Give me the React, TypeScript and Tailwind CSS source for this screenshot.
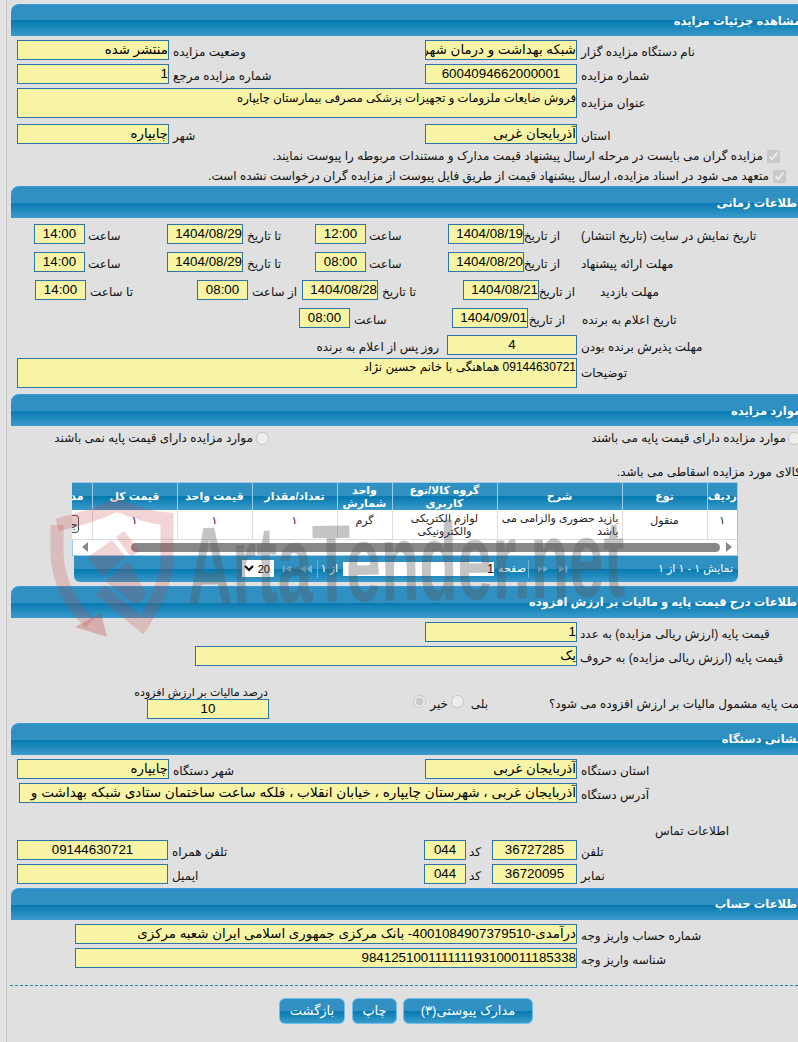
import React from 'react';

const barBg = 'bg-[linear-gradient(#2f90c1_0%,#2f90c1_50%,#0579b0_50%,#3b9bcb_100%)]';

const Section: React.FC<{ title: string; className?: string }> = ({ title, className = '' }) => (
  <div className={`h-[32px] ml-[4px] -mr-[30px] rounded-tl-[8px] border-t border-[#3a9ad9] flex items-center pr-[27px] pt-[2px] text-[11.5px] font-bold text-white ${barBg} ${className}`}>
    {title}
  </div>
);

const Lbl: React.FC<{ className: string; children?: React.ReactNode }> = ({ className, children }) => (
  <div className={`shrink-0 text-left whitespace-nowrap pt-[4px] leading-[16px] ${className}`}>{children}</div>
);

const Val: React.FC<{ className: string; children?: React.ReactNode }> = ({ className, children }) => (
  <div className={`shrink-0 h-[20px] bg-[#f7f5a5] border border-[#2a75a8] overflow-hidden whitespace-nowrap leading-[18px] text-[13.33px] text-black ${className}`}>{children}</div>
);

const Pager: React.FC<{ kind: 'end' | 'step'; flip?: boolean; className: string }> = ({ kind, flip, className }) => (
  <svg viewBox="0 0 12 8" className={`shrink-0 h-[8px] fill-[#6fb3d6] ${flip ? '-scale-x-100' : ''} ${className}`}>
    {kind === 'end' ? (
      <path d="M1 0h2v8H1zM11 0v8L4 4z" />
    ) : (
      <path d="M6 0v8L0 4zM12 0v8L6 4z" />
    )}
  </svg>
);

const columns = ['w-[30px]', 'w-[85px]', 'w-[125px]', 'w-[105px]', 'w-[55px]', 'w-[85px]', 'w-[75px]', 'w-[85px]', 'w-[20px]'];
const headers = ['ردیف', 'نوع', 'شرح', 'گروه کالا/نوع کاربری', 'واحد شمارش', 'تعداد/مقدار', 'قیمت واحد', 'قیمت کل', 'مدارک'];

const App: React.FC = () => {
  return (
    <div dir="rtl" className="relative w-[798px] h-[1042px] overflow-hidden bg-[#e3e3e3] text-[12px] text-[#111] font-['Liberation_Sans','DejaVu_Sans',sans-serif]">
      <div className="ml-[6px] h-full border-l border-[#c9c9c9] bg-[#e0e0e0] pt-[4px]">
        {/* جزئیات */}
        <Section title="مشاهده جزئیات مزایده" />
        <div className="flex mt-[4px]">
          <Lbl className="w-[221px] pl-[4px]">نام دستگاه مزایده گزار</Lbl>
          <Val className="w-[152px]">شبکه بهداشت و درمان شهرستان چایپاره</Val>
          <Lbl className="w-[256px] pl-[4px]">وضعیت مزایده</Lbl>
          <Val className="w-[152px]">منتشر شده</Val>
        </div>
        <div className="flex mt-[4px]">
          <Lbl className="w-[221px] pl-[4px]">شماره مزایده</Lbl>
          <Val className="w-[152px] text-center">6004094662000001</Val>
          <Lbl className="w-[256px] pl-[4px]">شماره مزایده مرجع</Lbl>
          <Val className="w-[152px]">1</Val>
        </div>
        <div className="flex mt-[4px]">
          <Lbl className="w-[221px] pl-[4px] pt-[7px]">عنوان مزایده</Lbl>
          <Val className="w-[560px] !h-[30px] !text-[11.7px] !leading-[17px]">فروش ضایعات ملزومات و تجهیزات پزشکی مصرفی بیمارستان چایپاره</Val>
        </div>
        <div className="flex mt-[6px]">
          <Lbl className="w-[221px] pl-[4px]">استان</Lbl>
          <Val className="w-[152px]">آذربایجان غربی</Val>
          <Lbl className="w-[256px] pl-[4px]">شهر</Lbl>
          <Val className="w-[152px]">چایپاره</Val>
        </div>
        <div className="flex items-center h-[16px] mt-[4px] pr-[18px]">
          <input type="checkbox" checked disabled readOnly className="m-0 w-[13px] h-[13px]" />
          <span className="mr-[4px]">مزایده گران می بایست در مرحله ارسال پیشنهاد قیمت مدارک و مستندات مربوطه را پیوست نمایند.</span>
        </div>
        <div className="flex items-center h-[16px] mt-[4px] pr-[12px]">
          <input type="checkbox" checked disabled readOnly className="m-0 w-[13px] h-[13px]" />
          <span className="mr-[4px]">متعهد می شود در اسناد مزایده، ارسال پیشنهاد قیمت از طریق فایل پیوست از مزایده گران درخواست نشده است.</span>
        </div>

        {/* زمان */}
        <Section title="اطلاعات زمانی" className="mt-[2px]" />
        <div className="flex mt-[6px]">
          <Lbl className="w-[238px] pl-[21px]">تاریخ نمایش در سایت (تاریخ انتشار)</Lbl>
          <Lbl className="w-[36px] pl-[3px]">از تاریخ</Lbl>
          <Val className="w-[76px] text-right">1404/08/19</Val>
          <Lbl className="w-[82px] pl-[3px]">ساعت</Lbl>
          <Val className="w-[51px] text-center">12:00</Val>
          <Lbl className="w-[72px] pl-[4px]">تا تاریخ</Lbl>
          <Val className="w-[76px] text-right">1404/08/29</Val>
          <Lbl className="w-[82px] pl-[3px]">ساعت</Lbl>
          <Val className="w-[51px] text-center">14:00</Val>
        </div>
        <div className="flex mt-[8px]">
          <Lbl className="w-[238px] pl-[21px]">مهلت ارائه پیشنهاد</Lbl>
          <Lbl className="w-[36px] pl-[3px]">از تاریخ</Lbl>
          <Val className="w-[76px] text-right">1404/08/20</Val>
          <Lbl className="w-[82px] pl-[3px]">ساعت</Lbl>
          <Val className="w-[51px] text-center">08:00</Val>
          <Lbl className="w-[72px] pl-[4px]">تا تاریخ</Lbl>
          <Val className="w-[76px] text-right">1404/08/29</Val>
          <Lbl className="w-[82px] pl-[3px]">ساعت</Lbl>
          <Val className="w-[51px] text-center">14:00</Val>
        </div>
        <div className="flex mt-[8px]">
          <Lbl className="w-[223px] pl-[25px]">مهلت بازدید</Lbl>
          <Lbl className="w-[36px] pl-[3px]">از تاریخ</Lbl>
          <Val className="w-[76px] text-right">1404/08/21</Val>
          <Lbl className="w-[85px] pl-[4px]">تا تاریخ</Lbl>
          <Val className="w-[76px] text-right">1404/08/28</Val>
          <Lbl className="w-[54px] pl-[4px]">از ساعت</Lbl>
          <Val className="w-[51px] text-center">08:00</Val>
          <Lbl className="w-[111px] pl-[4px]">تا ساعت</Lbl>
          <Val className="w-[51px] text-center">14:00</Val>
        </div>
        <div className="flex mt-[8px]">
          <Lbl className="w-[233px] pl-[17px]">تاریخ اعلام به برنده</Lbl>
          <Lbl className="w-[37px] pl-[3px]">از تاریخ</Lbl>
          <Val className="w-[76px] text-right">1404/09/01</Val>
          <Lbl className="w-[102px] pl-[4px]">ساعت</Lbl>
          <Val className="w-[51px] text-center">08:00</Val>
        </div>
        <div className="flex mt-[7px]">
          <Lbl className="w-[221px] pl-[4px]">مهلت پذیرش برنده بودن</Lbl>
          <Val className="w-[130px] text-center">4</Val>
          <div className="mr-[8px] pt-[4px] leading-[16px] whitespace-nowrap">روز پس از اعلام به برنده</div>
        </div>
        <div className="flex mt-[3px]">
          <Lbl className="w-[221px] pl-[4px] pt-[7px]">توضیحات</Lbl>
          <Val className="w-[560px] !h-[30px] !text-[12px] !leading-[17px]">09144630721 هماهنگی با خانم حسین نژاد</Val>
        </div>

        {/* موارد */}
        <Section title="موارد مزایده" className="mt-[6px]" />
        <div className="flex items-center h-[14px] mt-[5px] -mr-[3px]">
          <div className="flex items-center w-[532px] shrink-0">
            <input type="radio" disabled readOnly className="m-0 w-[13px] h-[13px]" />
            <span className="mr-[2px]">موارد مزایده دارای قیمت پایه می باشند</span>
          </div>
          <input type="radio" disabled readOnly className="m-0 w-[13px] h-[13px]" />
          <span className="mr-[3px]">موارد مزایده دارای قیمت پایه نمی باشند</span>
        </div>
        <div className="h-[20px] mt-[17px] -mr-[3px] leading-[20px] whitespace-nowrap">کالای مورد مزایده اسقاطی می باشد.</div>

        <div className="w-[666px] mr-[60px] border-x border-t border-[#9accea]">
          <table className="w-full table-fixed border-collapse bg-white text-[11px]">
            <colgroup>
              {columns.map((c, i) => <col key={i} className={c} />)}
            </colgroup>
            <thead>
              <tr className={`h-[27px] ${barBg}`}>
                {headers.map((h, i) => (
                  <th key={i} className="p-0 border-l border-[#9accea] last:border-l-0 last:whitespace-nowrap last:text-right last:pr-[8px] text-center align-middle font-bold text-white leading-[13px] overflow-hidden">
                    {h}
                  </th>
                ))}
              </tr>
            </thead>
            <tbody>
              <tr className="h-[29px] border-b border-[#dcdcdc] text-[#222]">
                <td className="p-0 pt-[2px] align-top text-center border-l border-[#dcdcdc]">۱</td>
                <td className="p-0 pt-[2px] align-top text-center border-l border-[#dcdcdc]">منقول</td>
                <td className="pt-[2px] pb-0 px-[3px] align-top text-right leading-[13px] border-l border-[#dcdcdc]">بازید حضوری والزامی می باشد</td>
                <td className="p-0 pt-[2px] align-top text-center leading-[13px] border-l border-[#dcdcdc]">لوازم الکتریکی والکترونیکی</td>
                <td className="p-0 pt-[2px] align-top text-center border-l border-[#dcdcdc]">گرم</td>
                <td className="p-0 pt-[2px] align-top text-center border-l border-[#dcdcdc]">۱</td>
                <td className="p-0 pt-[2px] align-top text-center border-l border-[#dcdcdc]">۱</td>
                <td className="p-0 pt-[2px] align-top text-center border-l border-[#dcdcdc]">۱</td>
                <td className="p-0 align-top overflow-hidden">
                  <div className="mr-[13px] mt-[5px] w-[40px] h-[18px] rounded-[3px] border border-[#555] bg-[#efefef] text-[11px] leading-[16px] whitespace-nowrap">جزئیات</div>
                </td>
              </tr>
            </tbody>
          </table>
          <div className="h-[16px] bg-white flex items-center border-b border-[#9accea]">
            <svg viewBox="0 0 6 10" className="shrink-0 w-[6px] h-[10px] mr-[5px] fill-[#888]"><path d="M0 0l6 5-6 5z" /></svg>
            <div className="shrink-0 w-[589px] h-[9px] mr-[-5px] rounded-full bg-[#888] translate-x-[-11px]" />
            <svg viewBox="0 0 6 10" className="shrink-0 w-[6px] h-[10px] mr-[38px] fill-[#888] translate-x-[-16px]"><path d="M6 0L0 5l6 5z" /></svg>
          </div>
        </div>
        <div className={`w-[664px] h-[26px] mr-[60px] rounded-b-[6px] flex items-center text-white text-[11px] ${barBg}`}>
          <div className="w-[100px] shrink-0 mr-[5px] whitespace-nowrap">نمایش ۱ - ۱ از ۱</div>
          <Pager kind="end" flip className="w-[10px] mr-[65px]" />
          <Pager kind="step" flip className="w-[10px] mr-[10px]" />
          <div className="shrink-0 w-[1px] h-[18px] mr-[9px] bg-[#6fb3d6]" />
          <div className="shrink-0 w-[30px] mr-[2px] whitespace-nowrap">صفحه</div>
          <div className="shrink-0 w-[151px] h-[14px] mr-[2px] bg-white text-black text-[12px] leading-[14px]">1</div>
          <div className="shrink-0 w-[16px] mr-[5px] whitespace-nowrap">از ۱</div>
          <div className="shrink-0 w-[1px] h-[18px] mr-[4px] bg-[#6fb3d6]" />
          <Pager kind="step" className="w-[12px] mr-[5px]" />
          <Pager kind="end" className="w-[10px] mr-[8px]" />
          <select className="shrink-0 w-[32px] h-[17px] mr-[8px] bg-white text-black text-[11px]" defaultValue="20">
            <option>20</option>
          </select>
        </div>

        {/* قیمت پایه */}
        <Section title="اطلاعات درج قیمت پایه و مالیات بر ارزش افزوده" className="mt-[4px]" />
        <div className="flex mt-[4px]">
          <Lbl className="w-[221px] pl-[3px]">قیمت پایه (ارزش ریالی مزایده) به عدد</Lbl>
          <Val className="w-[152px]">1</Val>
        </div>
        <div className="flex mt-[4px]">
          <Lbl className="w-[221px] pl-[3px]">قیمت پایه (ارزش ریالی مزایده) به حروف</Lbl>
          <Val className="w-[382px]">یک</Val>
        </div>
        <div className="flex mt-[20px] h-[33px]">
          <div className="w-[249px] shrink-0 flex justify-end pt-[10px] whitespace-nowrap leading-[16px]">
            <span className="shrink-0">قیمت پایه مشمول مالیات بر ارزش افزوده می شود؟</span>
          </div>
          <div className="w-[61px] shrink-0" />
          <div className="w-[24px] shrink-0 pt-[10px] leading-[16px]">بلی</div>
          <input type="radio" disabled readOnly className="m-0 mt-[9px] w-[13px] h-[13px] shrink-0" />
          <div className="w-[24px] shrink-0 pr-[3px] pt-[10px] leading-[16px]">خیر</div>
          <input type="radio" checked disabled readOnly className="m-0 mt-[9px] mr-[1px] w-[13px] h-[13px] shrink-0" />
          <div className="flex flex-col items-start shrink-0 mr-[144px]">
            <div className="h-[13px] text-[11px] leading-[13px] whitespace-nowrap mr-[1px]">درصد مالیات بر ارزش افزوده</div>
            <Val className="w-[122px] text-center">10</Val>
          </div>
        </div>

        {/* نشانی */}
        <Section title="نشانی دستگاه" className="mt-[4px]" />
        <div className="flex mt-[4px]">
          <Lbl className="w-[221px] pl-[4px]">استان دستگاه</Lbl>
          <Val className="w-[152px]">آذربایجان غربی</Val>
          <Lbl className="w-[256px] pl-[4px]">شهر دستگاه</Lbl>
          <Val className="w-[152px]">چایپاره</Val>
        </div>
        <div className="flex mt-[4px]">
          <Lbl className="w-[221px] pl-[4px]">آدرس دستگاه</Lbl>
          <Val className="w-[558px] !text-[13.6px]">آذربایجان غربی ، شهرستان چایپاره ، خیابان انقلاب ، فلکه ساعت ساختمان ستادی شبکه بهداشت و</Val>
        </div>
        <div className="h-[37px] pt-[20px] w-[143px] text-left leading-[16px] whitespace-nowrap">اطلاعات تماس</div>
        <div className="flex">
          <Lbl className="w-[221px] pl-[4px]">تلفن</Lbl>
          <Val className="w-[85px] text-center">36727285</Val>
          <Lbl className="w-[26px] pl-[3px]">کد</Lbl>
          <Val className="w-[42px] text-center">044</Val>
          <Lbl className="w-[256px] pl-[4px]">تلفن همراه</Lbl>
          <Val className="w-[151px] text-center">09144630721</Val>
        </div>
        <div className="flex mt-[4px]">
          <Lbl className="w-[221px] pl-[4px]">نمابر</Lbl>
          <Val className="w-[85px] text-center">36720095</Val>
          <Lbl className="w-[26px] pl-[3px]">کد</Lbl>
          <Val className="w-[42px] text-center">044</Val>
          <Lbl className="w-[256px] pl-[4px]">ایمیل</Lbl>
          <Val className="w-[151px]" />
        </div>

        {/* حساب */}
        <Section title="اطلاعات حساب" className="mt-[4px]" />
        <div className="flex mt-[4px]">
          <Lbl className="w-[221px] pl-[4px]">شماره حساب واریز وجه</Lbl>
          <Val className="w-[502px]">درآمدی-4001084907379510- بانک مرکزی جمهوری اسلامی ایران شعبه مرکزی</Val>
        </div>
        <div className="flex mt-[4px]">
          <Lbl className="w-[221px] pl-[4px]">شناسه واریز وجه</Lbl>
          <Val className="w-[502px]">984125100111111193100011185338</Val>
        </div>
        <div className="mt-[17px] ml-[3px] border-t border-dashed border-[#2d7fa9]" />
        <div className="flex mt-[12px] pr-[265px] text-white text-[13px]">
          <button className={`w-[130px] h-[26px] rounded-[6px] border border-[#6fc0ea] ${barBg}`}>مدارک پیوستی(۳)</button>
          <button className={`w-[45px] h-[26px] mr-[6px] rounded-[6px] border border-[#6fc0ea] ${barBg}`}>چاپ</button>
          <button className={`w-[66px] h-[26px] mr-[7px] rounded-[6px] border border-[#6fc0ea] ${barBg}`}>بازگشت</button>
        </div>
      </div>

      {/* watermark */}
      <svg viewBox="0 0 150 150" className="absolute left-[40px] top-[495px] w-[150px] h-[150px] pointer-events-none" fill="none">
        <g stroke="#c53a3a" strokeOpacity="0.22" strokeWidth="13">
          <path d="M17 30Q50 22 77 10Q105 22 127 24V70Q122 100 102 130L60 95" />
          <path d="M17 30V60Q20 100 50 128" />
        </g>
        <path d="M35 132L67 142L61 118Z" fill="#c53a3a" fillOpacity="0.3" />
        <path d="M48 62L72 45L86 62L62 82ZM76 42L84 36L100 56L91 62ZM65 86L88 66L107 100L96 110Z" fill="#c53a3a" fillOpacity="0.22" />
      </svg>
      <div dir="ltr" className="absolute left-[186px] top-[516px] origin-top-left scale-x-[0.57] -rotate-[1deg] whitespace-nowrap text-[110px] leading-[100px] font-bold text-[#555555]/35 pointer-events-none">
        ArtaTender.net
      </div>
    </div>
  );
};

export default App;
